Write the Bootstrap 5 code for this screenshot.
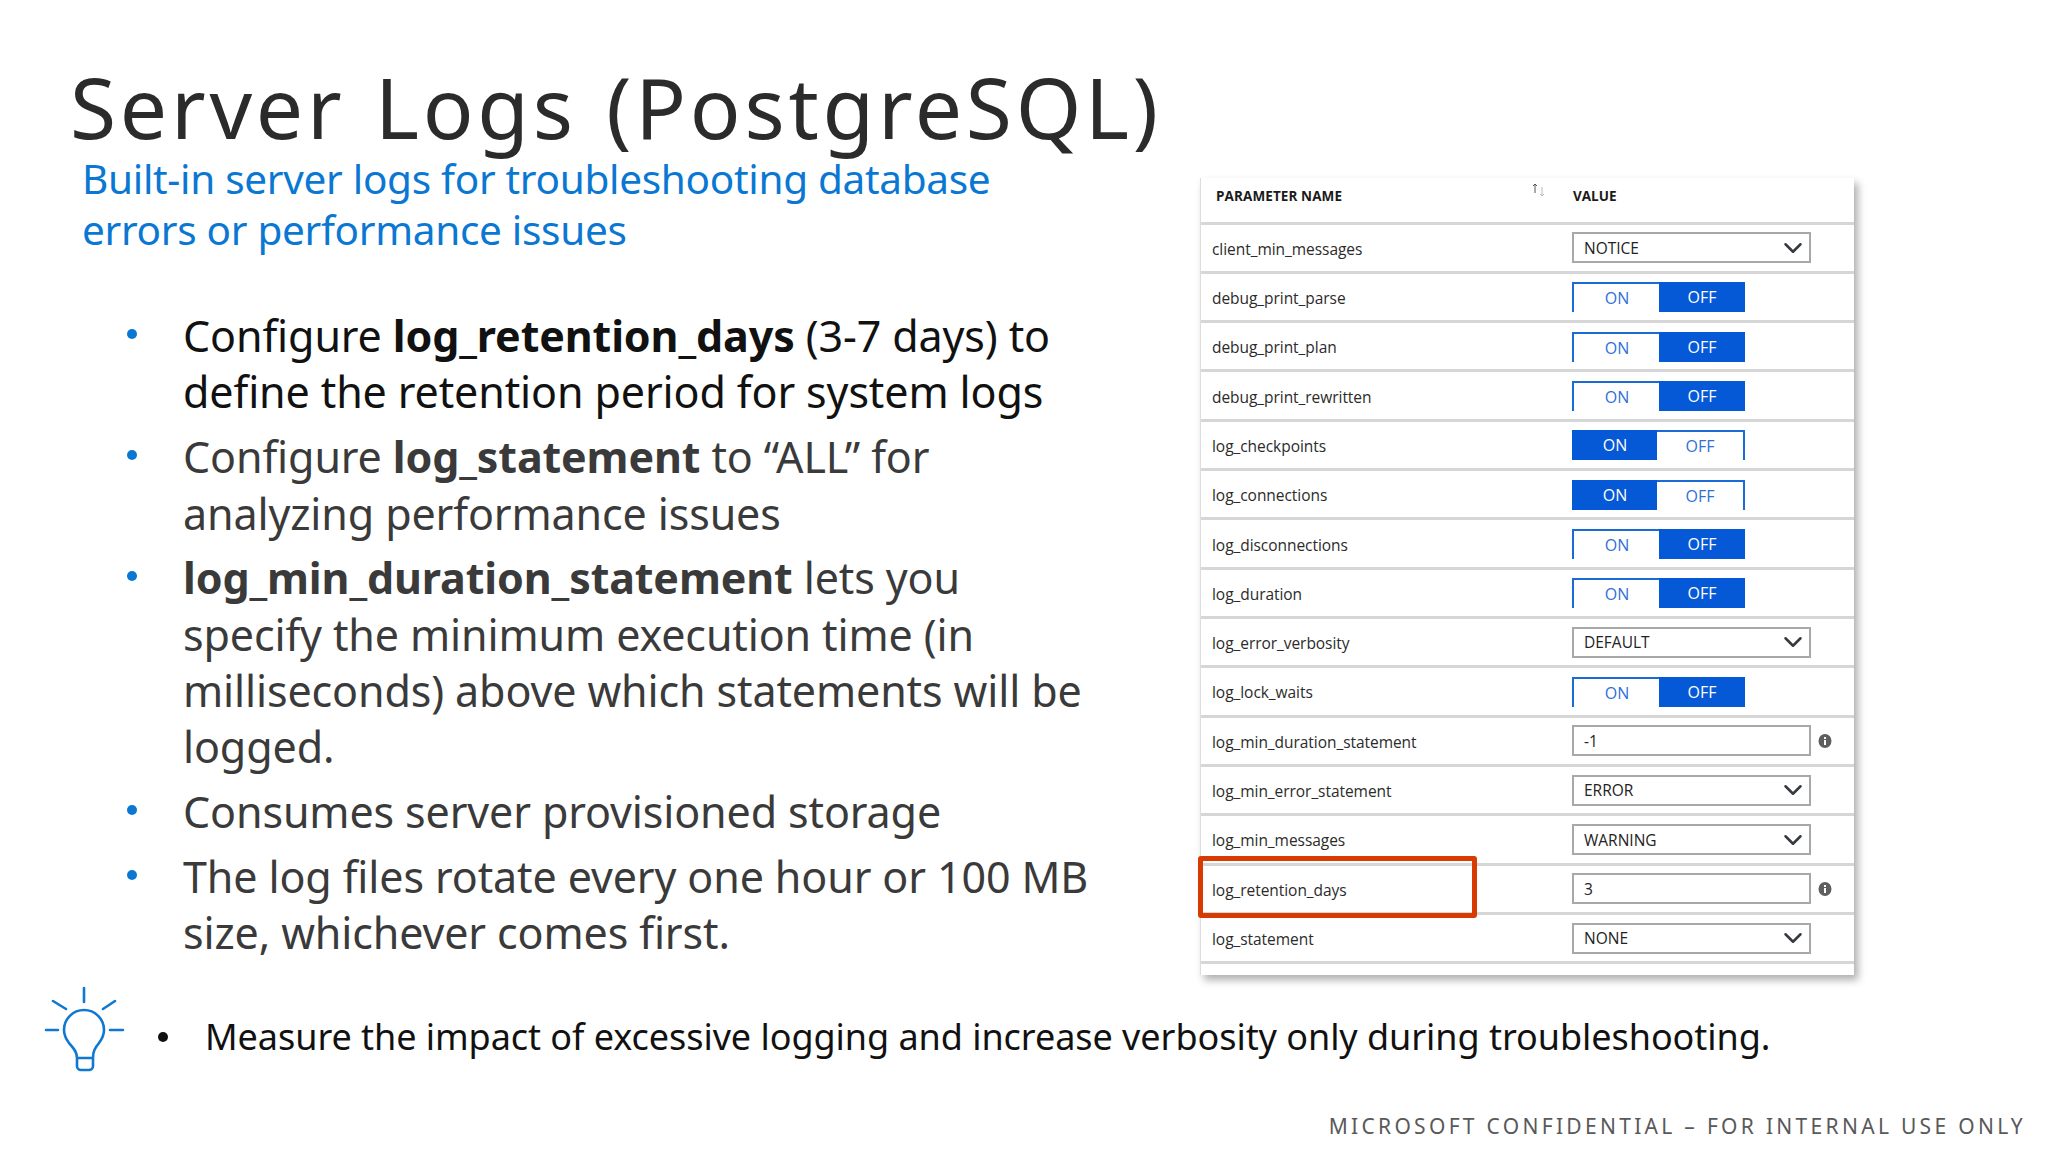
<!DOCTYPE html>
<html lang="en">
<head>
<meta charset="utf-8">
<title>Server Logs (PostgreSQL)</title>
<link rel="stylesheet" href="https://cdn.jsdelivr.net/npm/bootstrap@5.3.0/dist/css/bootstrap.min.css">
<style>
html,body{background:#fff;margin:0}
.slide{width:2048px;height:1152px;overflow:hidden;font-family:"Noto Sans","Open Sans",sans-serif;color:#262626}
.top-area{height:968px}
.left-pane{width:1200px;padding:65px 0 0 70px;flex:none}
.slide-title{font-size:84px;line-height:84px;font-weight:400;letter-spacing:3.75px;word-spacing:4px;color:#2b2b2b;margin:0;white-space:nowrap}
.slide-sub{font-size:40.5px;line-height:51px;color:#0a78d2;margin:4px 0 0 12px;width:950px;letter-spacing:-.3px}
.points{list-style:none;margin:53px 0 0 0;padding:0 0 0 54px;font-size:43px;line-height:56.4px;letter-spacing:-.12px;color:#3a3a3a}
.points li{margin-bottom:8.3px;width:979px}
.points li:first-child{color:#111}
.dot-cell{flex:none;width:59px;height:56px;display:flex;align-items:center}
.dot-blue{width:10px;height:10px;border-radius:50%;background:#0a78d2;margin-left:3px;margin-top:-4px}
.panel{width:654px;margin:178px 0 0 0;height:797px;background:#fff;box-shadow:4px 5px 8px rgba(0,0,0,.32);border-left:1px solid #ddd;font-family:"Open Sans","Noto Sans",sans-serif;flex:none}
.head-row{height:46.5px;border-bottom:3px solid #d6d6d6;font-size:13.5px;font-weight:700;color:#1b1b1b;padding-bottom:8px}
.head-name{width:330px;padding-left:15px;letter-spacing:.1px}
.head-sort{flex:none;width:15px;margin-right:27px;height:22px;margin-top:-8px}
.data-row{height:49.33px;border-bottom:3px solid #d6d6d6;font-size:15.5px;color:#2b2b2b;letter-spacing:-.05px}
.param-name{width:371px;padding-left:11px;padding-top:3px}
.form-select.field,.form-control.field{width:239px;height:31px;padding:0 0 0 10px;border:2px solid #a8a8a8;border-radius:0;font-size:15.5px;line-height:26px;color:#222;box-shadow:none;letter-spacing:0;background-color:#fff}
.form-select.field{background-position:right 6px center;background-size:20px 20px}
.toggle-group{width:174px;height:30px;margin-top:1px}
.toggle-group .btn{flex:none;height:30px;padding:1px 0 0;border-radius:0;font-size:16px;line-height:28px;letter-spacing:0}
.btn.tg-on{width:86px;background:#0558d6;border:0;color:#fff}
.btn.tg-blank{width:88px;background:#fff;color:#2f6fd8;border:0 solid #1a6ad8}
.toggle-group .btn.tg-blank{line-height:26px}
.btn.tg-blank.at-left{border-width:2px 0 0 2px}
.btn.tg-blank.at-right{border-width:2px 2px 0 0}
.info-mark{flex:none;margin-left:7px}
.panel-end{height:10px}
.red-frame{position:absolute;left:-3px;top:-10px;width:279px;height:62px;border:5px solid #d83b01;border-radius:3px}
.tip-row{height:138px;padding-left:40px;font-size:36px;letter-spacing:-.05px;color:#111}
.tip-icon{flex:none;margin-top:-18px}
.tip-dot{flex:none;width:10px;height:10px;background:#111;border-radius:50%;margin:0 37px 0 28px}
.tip-text{white-space:nowrap}
.foot-note{font-size:21px;line-height:30px;letter-spacing:3.3px;color:#595959;padding-right:22px;white-space:nowrap;margin-top:5px}
</style>
</head>
<body>
<div class="slide d-flex flex-column">
  <div class="top-area d-flex">
    <div class="left-pane">
      <h1 class="slide-title">Server Logs (PostgreSQL)</h1>
      <p class="slide-sub">Built-in server logs for troubleshooting database errors or performance issues</p>
      <ul class="points">
        <li class="d-flex"><span class="dot-cell"><span class="dot-blue"></span></span><span>Configure <b>log_retention_days</b> (3-7 days) to define the retention period for system logs</span></li>
        <li class="d-flex"><span class="dot-cell"><span class="dot-blue"></span></span><span>Configure <b>log_statement</b> to “ALL” for<br>analyzing performance issues</span></li>
        <li class="d-flex"><span class="dot-cell"><span class="dot-blue"></span></span><span><b>log_min_duration_statement</b> lets you specify the minimum execution time (in milliseconds) above which statements will be logged.</span></li>
        <li class="d-flex"><span class="dot-cell"><span class="dot-blue"></span></span><span>Consumes server provisioned storage</span></li>
        <li class="d-flex"><span class="dot-cell"><span class="dot-blue"></span></span><span>The log files rotate every one hour or 100 MB size, whichever comes first.</span></li>
      </ul>
    </div>
    <div class="panel">
      <div class="head-row d-flex align-items-center">
        <div class="head-name">PARAMETER NAME</div>
        <svg class="head-sort" viewBox="0 0 15 22" aria-hidden="true"><path d="M4 12V3M2 5l2-2 2 2" fill="none" stroke="#555" stroke-width="1"/><path d="M11 6v9M9 13l2 2 2-2" fill="none" stroke="#bbb" stroke-width="1"/></svg>
        <div>VALUE</div>
      </div>
      <div class="data-row d-flex align-items-center"><div class="param-name">client_min_messages</div><div class="d-flex align-items-center"><select class="form-select field"><option>NOTICE</option></select></div></div>
      <div class="data-row d-flex align-items-center"><div class="param-name">debug_print_parse</div><div><div class="btn-group toggle-group"><span class="btn tg-blank at-left">ON</span><span class="btn tg-on">OFF</span></div></div></div>
      <div class="data-row d-flex align-items-center"><div class="param-name">debug_print_plan</div><div><div class="btn-group toggle-group"><span class="btn tg-blank at-left">ON</span><span class="btn tg-on">OFF</span></div></div></div>
      <div class="data-row d-flex align-items-center"><div class="param-name">debug_print_rewritten</div><div><div class="btn-group toggle-group"><span class="btn tg-blank at-left">ON</span><span class="btn tg-on">OFF</span></div></div></div>
      <div class="data-row d-flex align-items-center"><div class="param-name">log_checkpoints</div><div><div class="btn-group toggle-group"><span class="btn tg-on">ON</span><span class="btn tg-blank at-right">OFF</span></div></div></div>
      <div class="data-row d-flex align-items-center"><div class="param-name">log_connections</div><div><div class="btn-group toggle-group"><span class="btn tg-on">ON</span><span class="btn tg-blank at-right">OFF</span></div></div></div>
      <div class="data-row d-flex align-items-center"><div class="param-name">log_disconnections</div><div><div class="btn-group toggle-group"><span class="btn tg-blank at-left">ON</span><span class="btn tg-on">OFF</span></div></div></div>
      <div class="data-row d-flex align-items-center"><div class="param-name">log_duration</div><div><div class="btn-group toggle-group"><span class="btn tg-blank at-left">ON</span><span class="btn tg-on">OFF</span></div></div></div>
      <div class="data-row d-flex align-items-center"><div class="param-name">log_error_verbosity</div><div class="d-flex align-items-center"><select class="form-select field"><option>DEFAULT</option></select></div></div>
      <div class="data-row d-flex align-items-center"><div class="param-name">log_lock_waits</div><div><div class="btn-group toggle-group"><span class="btn tg-blank at-left">ON</span><span class="btn tg-on">OFF</span></div></div></div>
      <div class="data-row d-flex align-items-center"><div class="param-name">log_min_duration_statement</div><div class="d-flex align-items-center"><input class="form-control field" value="-1"><svg class="info-mark" width="14" height="14" viewBox="0 0 14 14" aria-hidden="true"><ellipse cx="7" cy="7" rx="6.5" ry="7" fill="#5f5f5f"/><rect x="6" y="3" width="2" height="2" fill="#fff"/><rect x="6" y="6" width="2" height="5" fill="#fff"/></svg></div></div>
      <div class="data-row d-flex align-items-center"><div class="param-name">log_min_error_statement</div><div class="d-flex align-items-center"><select class="form-select field"><option>ERROR</option></select></div></div>
      <div class="data-row d-flex align-items-center"><div class="param-name">log_min_messages</div><div class="d-flex align-items-center"><select class="form-select field"><option>WARNING</option></select></div></div>
      <div class="data-row d-flex align-items-center position-relative"><div class="red-frame"></div><div class="param-name">log_retention_days</div><div class="d-flex align-items-center"><input class="form-control field" value="3"><svg class="info-mark" width="14" height="14" viewBox="0 0 14 14" aria-hidden="true"><ellipse cx="7" cy="7" rx="6.5" ry="7" fill="#5f5f5f"/><rect x="6" y="3" width="2" height="2" fill="#fff"/><rect x="6" y="6" width="2" height="5" fill="#fff"/></svg></div></div>
      <div class="data-row d-flex align-items-center"><div class="param-name">log_statement</div><div class="d-flex align-items-center"><select class="form-select field"><option>NONE</option></select></div></div>
      <div class="panel-end"></div>
    </div>
  </div>
  <div class="tip-row d-flex align-items-center">
    <svg class="tip-icon" width="90" height="95" viewBox="0 0 90 95" aria-hidden="true"><g fill="none" stroke="#0f78d0" stroke-width="2.6" stroke-linecap="round" stroke-linejoin="round"><path d="M37 77C37 70 33 67 29 62C26 58 24 54 24 49A20 20 0 0 1 64 49C64 54 62 58 59 62C55 67 53 70 53 77V85A4 4 0 0 1 49 89H41A4 4 0 0 1 37 85ZM37 77H53"/><path d="M44 7V21M13 20L26 28M75 20L63 28M6 49H18M70 49H83"/></g></svg>
    <span class="tip-dot"></span>
    <span class="tip-text">Measure the impact of excessive logging and increase verbosity only during troubleshooting.</span>
  </div>
  <div class="foot-note text-end">MICROSOFT CONFIDENTIAL – FOR INTERNAL USE ONLY</div>
</div>
<script src="https://cdn.jsdelivr.net/npm/bootstrap@5.3.0/dist/js/bootstrap.bundle.min.js"></script>
</body>
</html>
